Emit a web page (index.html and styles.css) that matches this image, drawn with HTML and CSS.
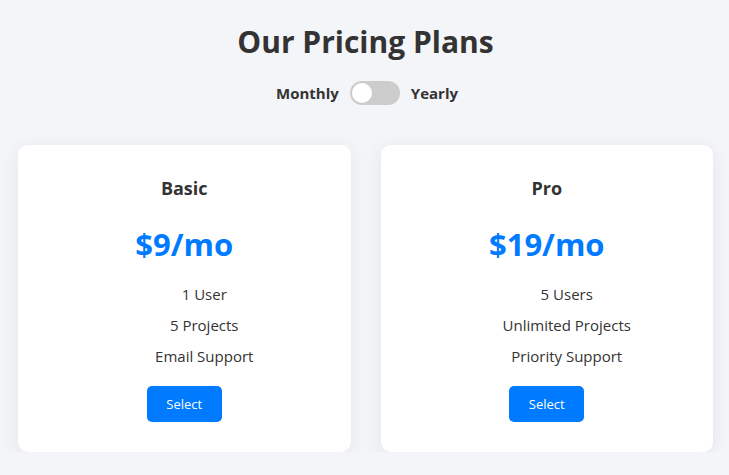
FILE: index.html
```html
<!DOCTYPE html>
<html lang="en">
<head>
<meta charset="utf-8">
<title>Our Pricing Plans</title>
<link rel="stylesheet" href="styles.css">
</head>
<body>
<main class="page">
  <h1 class="title">Our Pricing Plans</h1>
  <div class="billing">
    <span class="billing-label">Monthly</span>
    <label class="switch">
      <input type="checkbox" class="switch-input">
      <span class="switch-track"><span class="switch-knob"></span></span>
    </label>
    <span class="billing-label">Yearly</span>
  </div>
  <section class="plans">
    <div class="plan">
      <h3 class="plan-name">Basic</h3>
      <div class="plan-price">$9/mo</div>
      <ul class="plan-features">
        <li>1 User</li>
        <li>5 Projects</li>
        <li>Email Support</li>
      </ul>
      <button class="plan-btn">Select</button>
    </div>
    <div class="plan">
      <h3 class="plan-name">Pro</h3>
      <div class="plan-price">$19/mo</div>
      <ul class="plan-features">
        <li>5 Users</li>
        <li>Unlimited Projects</li>
        <li>Priority Support</li>
      </ul>
      <button class="plan-btn">Select</button>
    </div>
  </section>
</main>
</body>
</html>
```

FILE: styles.css
```css
* { box-sizing: border-box; }
html, body { margin: 0; padding: 0; }
body {
  background: #f4f5f9;
  font-family: "Open Sans", "Noto Sans", Arial, sans-serif;
  color: #333;
}
.page {
  padding: 20px 16px 0 18px;
  display: flex;
  flex-direction: column;
  align-items: stretch;
}
.title {
  margin: 0;
  text-align: center;
  font-size: 30px;
  line-height: 43px;
  font-weight: 700;
  color: #333;
}
.billing {
  margin-top: 18px;
  display: flex;
  justify-content: center;
  align-items: center;
  gap: 11px;
  height: 24px;
  padding-left: 3px;
}
.billing-label {
  font-size: 15px;
  font-weight: 700;
  color: #333;
}
.switch {
  position: relative;
  display: inline-block;
  width: 50px;
  height: 24px;
}
.switch-input { display: none; }
.switch-track {
  display: block;
  width: 50px;
  height: 24px;
  border-radius: 12px;
  background: #cccccc;
  position: relative;
}
.switch-knob {
  position: absolute;
  left: 2px;
  top: 2px;
  width: 20px;
  height: 20px;
  border-radius: 50%;
  background: #fff;
}
.plans {
  margin-top: 40px;
  display: flex;
  gap: 30px;
}
.plan {
  flex: 1;
  background: #fff;
  border-radius: 10px;
  box-shadow: 0 4px 20px rgba(0, 0, 0, 0.07);
  padding: 20px 20px 30px;
  text-align: center;
  display: flex;
  flex-direction: column;
  align-items: center;
}
.plan-name {
  margin: 11px 0 0;
  font-size: 18px;
  line-height: 24px;
  font-weight: 700;
  color: #333;
}
.plan-price {
  margin-top: 24px;
  font-size: 31px;
  line-height: 40px;
  font-weight: 700;
  color: #007bff;
}
.plan-features {
  list-style: none;
  margin: 19.5px 0 0;
  padding: 0 0 0 40px;
  align-self: stretch;
}
.plan-features li {
  font-size: 15px;
  line-height: 21px;
  margin-bottom: 10px;
  color: #333;
}
.plan-features li:last-child { margin-bottom: 0; }
.plan-btn {
  margin-top: 19.5px;
  width: 75px;
  height: 36px;
  padding: 0;
  border: none;
  border-radius: 5px;
  background: #007bff;
  color: #fff;
  font-family: "Open Sans", "Noto Sans", Arial, sans-serif;
  font-size: 13px;
}
```
